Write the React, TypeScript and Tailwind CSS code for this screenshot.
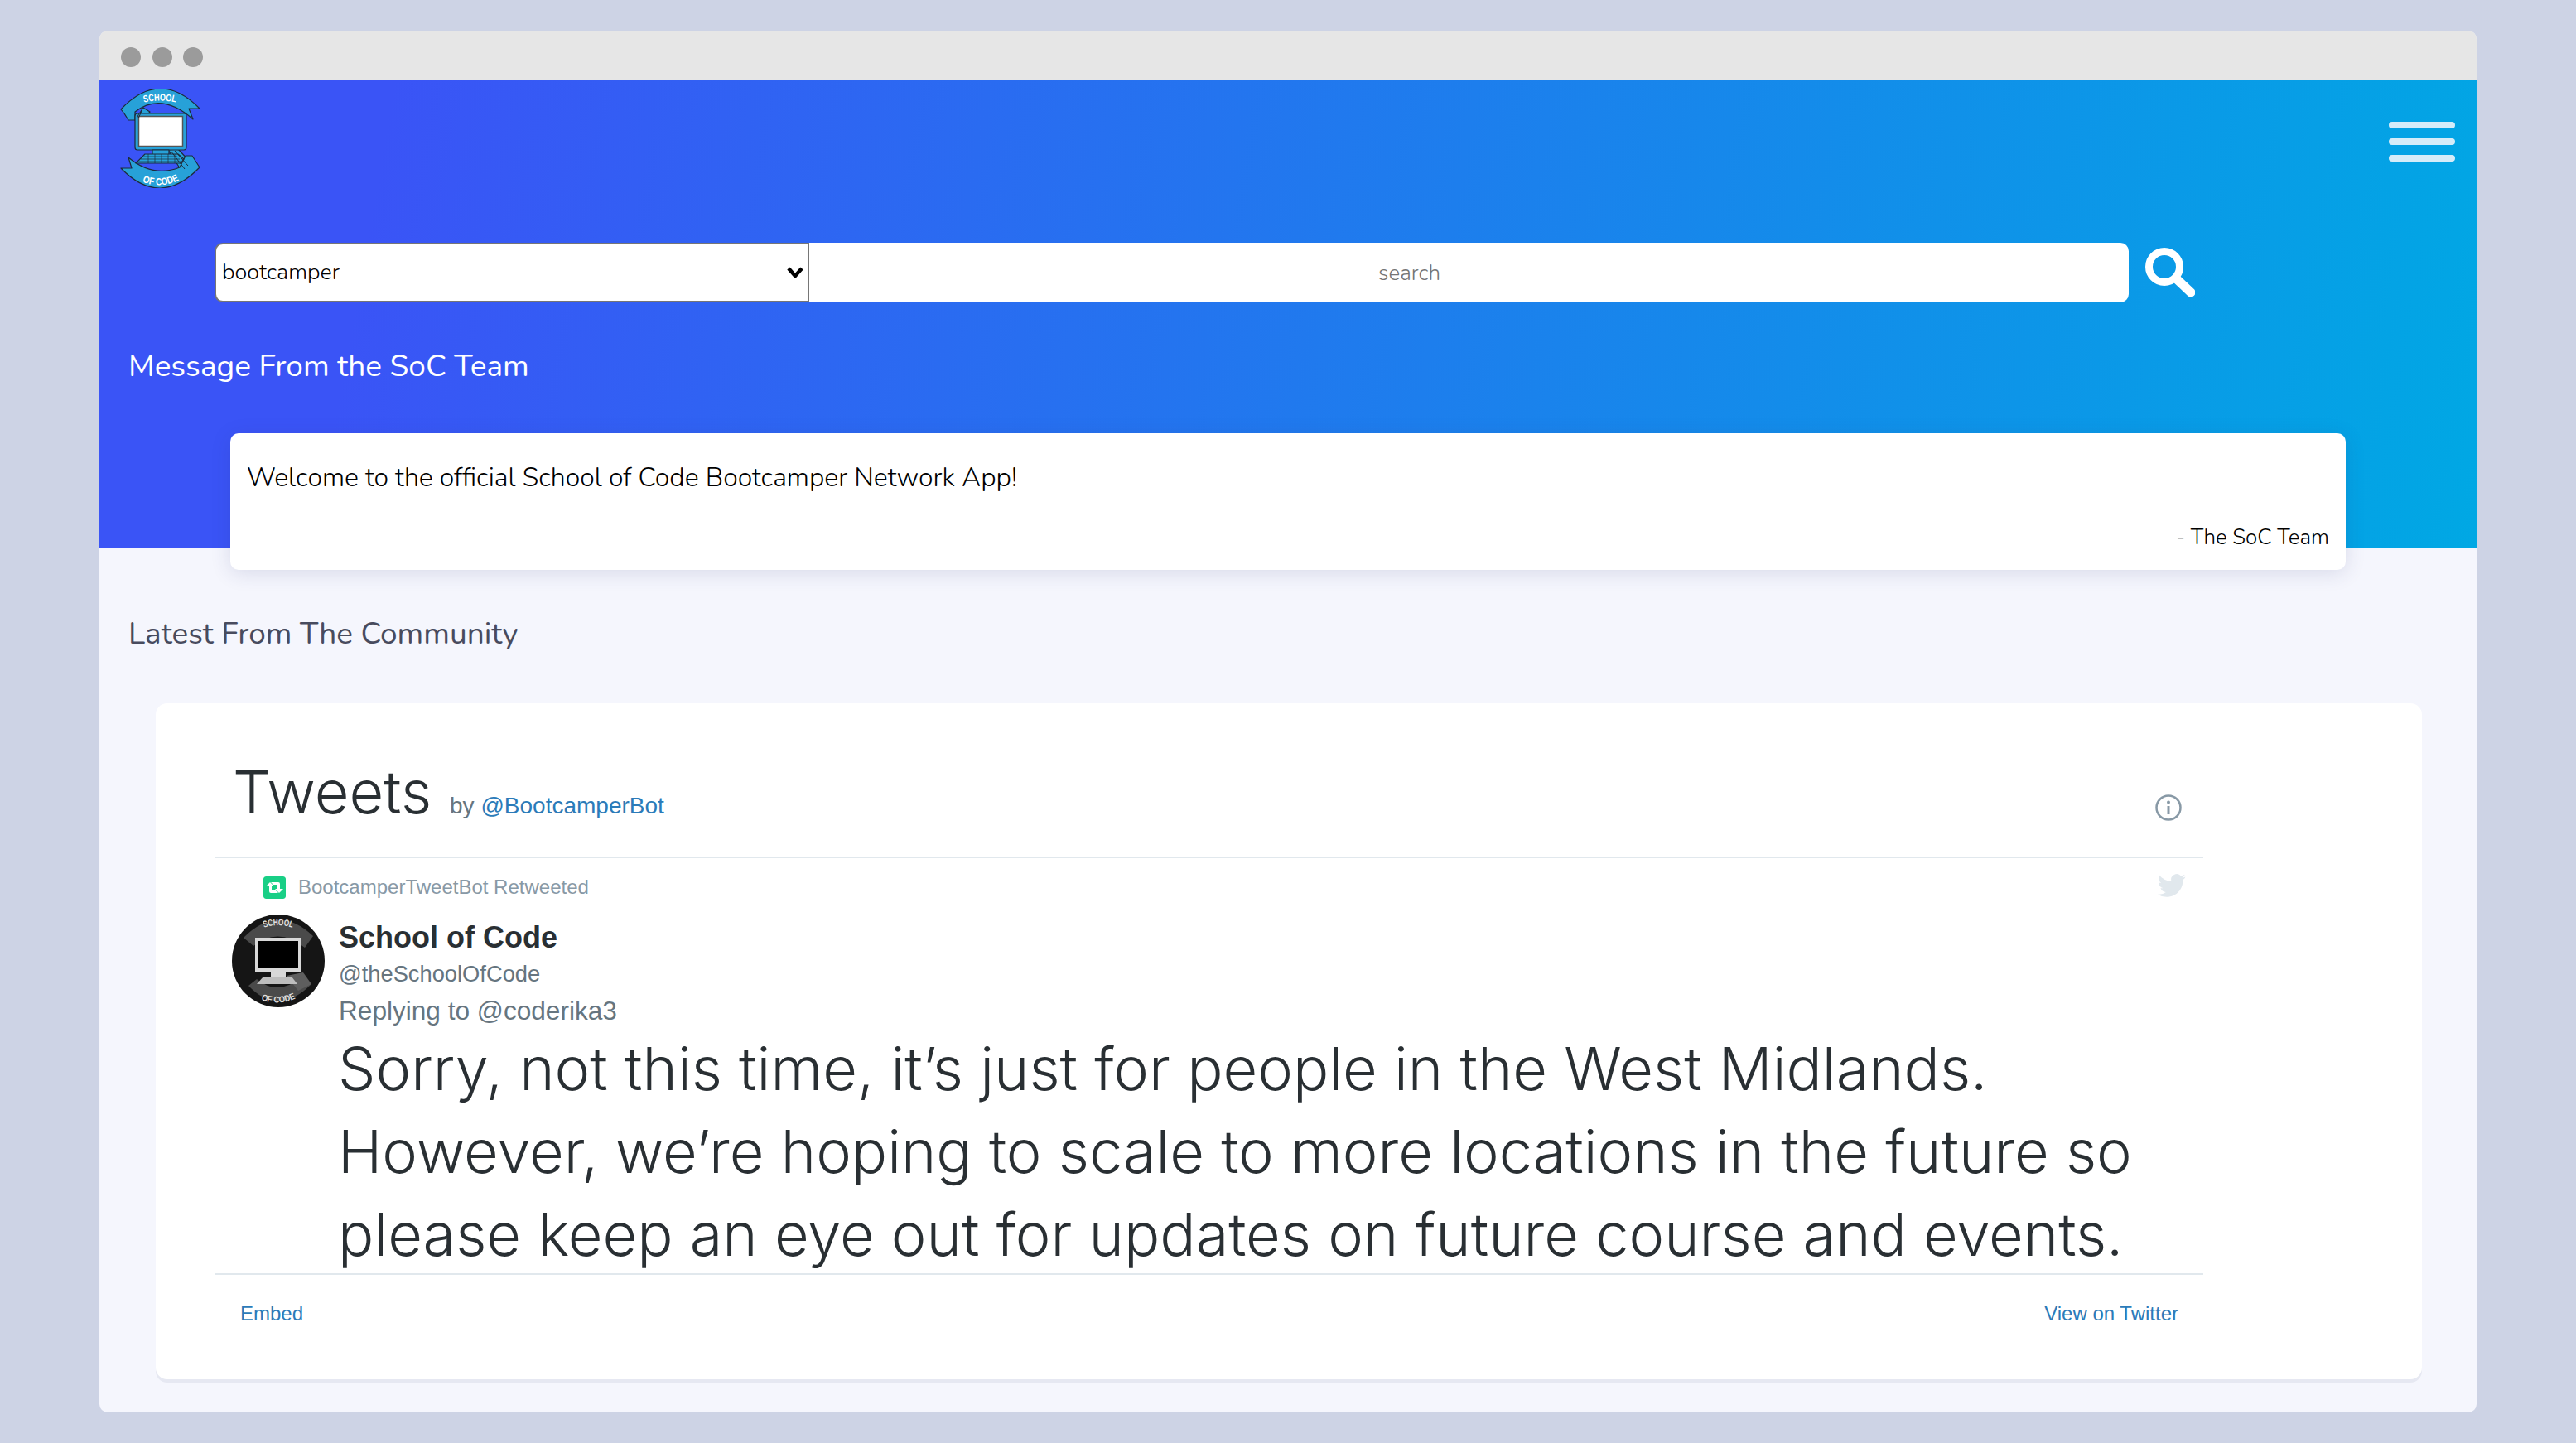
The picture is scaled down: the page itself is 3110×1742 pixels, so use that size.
import React from "react";

function Logo() {
  return (
    <svg viewBox="0 0 97 120" className="w-[97px] h-[120px] block">
      <defs>
        <path id="topArc" d="M24 18 Q48 11 72 18" fill="none" />
        <path id="botArc" d="M26 112 Q48 122 72 110" fill="none" />
      </defs>
      <g stroke="#1d2b3a" strokeWidth="1.2" strokeLinejoin="round" fill="#27a1d8">
        <path d="M28 23 L18 38 L26 40 L36 28 Z" />
        <path d="M58 74 L70 73 L86 90 L76 102 Z" />
        <path d="M1 25 Q48 -24.500 96 24 L83 24 L88 37 Q50 3.500 18 28 L18 38 L10 38 L5 30 Z" />
        <path d="M10 83 Q40 108 72 95 L79 81 L87 81 L96 95 Q48 144.500 1 96 L14 96 Z" />
        <rect x="18" y="30" width="62" height="44" rx="3" />
        <rect x="39" y="74" width="20" height="6" />
        <path d="M19 90 L30 79 L70 79 L77 85 L73 90 Z" />
      </g>
      <rect x="22.500" y="33.500" width="53" height="36" fill="#fff" stroke="#555" strokeWidth="1.500" />
      <path d="M29 82 H69 M25 85 H72 M23 88 H74 M34 79 V90 M42 79 V90 M50 79 V90 M58 79 V90 M66 79 V90" stroke="#1d2b3a" strokeWidth="0.7" fill="none" />
      <path d="M23 30 L20 36 M26 27 L22 36 M61 75 L78 97 M66 75 L82 93" stroke="#1d2b3a" strokeWidth="1" fill="none" />
      <text fontFamily="'Liberation Sans',sans-serif" fontWeight="700" fontSize="12" fill="#fff">
        <textPath href="#topArc" startOffset="50%" textAnchor="middle" textLength="39" lengthAdjust="spacingAndGlyphs">SCHOOL</textPath>
      </text>
      <text fontFamily="'Liberation Sans',sans-serif" fontWeight="700" fontSize="12" fill="#fff">
        <textPath href="#botArc" startOffset="50%" textAnchor="middle" textLength="46" lengthAdjust="spacingAndGlyphs">OF CODE</textPath>
      </text>
    </svg>
  );
}

function Avatar() {
  return (
    <svg viewBox="0 0 112 112" className="w-[112px] h-[112px] block shrink-0">
      <defs>
        <path id="avTop" d="M36 17 Q56 9 76 17" fill="none" />
        <path id="avBot" d="M32 102 Q56 112 80 100" fill="none" />
      </defs>
      <circle cx="56" cy="56" r="56" fill="#151515" />
      <path d="M14 28 Q56 -14 98 26 L88 40 Q56 14 26 38 Z" fill="#4a4a4a" />
      <path d="M20 86 Q56 124 96 84 L86 74 Q56 100 30 78 Z" fill="#4a4a4a" />
      <path d="M66 74 L86 70 L96 84 L80 92 Z" fill="#5e5e5e" />
      <rect x="30" y="30" width="52" height="37" fill="#000" stroke="#d8d8d8" strokeWidth="4" />
      <rect x="47" y="69" width="18" height="7" fill="#d8d8d8" />
      <path d="M30 84 L38 75 L72 75 L79 84 Z" fill="#bdbdbd" />
      <text fontFamily="'Liberation Sans',sans-serif" fontWeight="700" fontSize="11" fill="#e0e0e0">
        <textPath href="#avTop" startOffset="50%" textAnchor="middle" textLength="35" lengthAdjust="spacingAndGlyphs">SCHOOL</textPath>
      </text>
      <text fontFamily="'Liberation Sans',sans-serif" fontWeight="700" fontSize="11" fill="#e0e0e0">
        <textPath href="#avBot" startOffset="50%" textAnchor="middle" textLength="43" lengthAdjust="spacingAndGlyphs">OF CODE</textPath>
      </text>
    </svg>
  );
}

function Bird() {
  return (
    <svg viewBox="0 0 24 24" className="w-[34px] h-[34px] block" fill="#e1e8ed">
      <path d="M23.6 4.6c-.9.4-1.8.7-2.8.8 1-.6 1.8-1.6 2.2-2.7-1 .6-2 1-3.1 1.2A4.9 4.9 0 0 0 11.5 8.400C7.400 8.200 3.800 6.200 1.400 3.200c-.4.700-.7 1.600-.7 2.500 0 1.700.9 3.200 2.200 4.100-.8 0-1.600-.2-2.200-.6v.1c0 2.400 1.700 4.400 3.900 4.800-.4.1-.8.2-1.300.2-.3 0-.6 0-.9-.1.600 2 2.400 3.400 4.600 3.400A9.900 9.900 0 0 1 0 19.500 14 14 0 0 0 7.500 21.700c9.100 0 14-7.500 14-14v-.6c1-.7 1.800-1.600 2.100-2.500z" />
    </svg>
  );
}

export default function App() {
  const sans = "font-['Nunito','Lato','Noto_Sans',sans-serif]";
  const hv = "font-['Liberation_Sans',Arial,sans-serif]";
  const light = "font-['Inter','Liberation_Sans',sans-serif] font-light";
  return (
    <div className="w-[3110px] h-[1742px] bg-[#cdd3e5] pt-[37px] pl-[120px] overflow-hidden">
      <div className="w-[2870px] h-[1668px] rounded-[10px] overflow-hidden bg-[#f5f6fd] flex flex-col">
        <div className="h-[60px] shrink-0 bg-[#e6e6e6] flex items-center gap-[13.500px] pl-[26px] pt-[4px]">
          <div className="w-[24px] h-[24px] rounded-full bg-[#9b9b9b]" />
          <div className="w-[24px] h-[24px] rounded-full bg-[#9b9b9b]" />
          <div className="w-[24px] h-[24px] rounded-full bg-[#9b9b9b]" />
        </div>

        <div className="h-[564px] shrink-0 bg-[linear-gradient(100deg,#3a54f6_12%,#00a8e4_100%)] flex flex-col">
          <div className="flex justify-between pl-[25px] pr-[26px] pt-[10px] h-[196px]">
            <Logo />
            <div className="flex flex-col gap-[12px] pt-[40px]">
              <div className="w-[80px] h-[8px] rounded-full bg-[#d5ecf9]" />
              <div className="w-[80px] h-[8px] rounded-full bg-[#d5ecf9]" />
              <div className="w-[80px] h-[8px] rounded-full bg-[#d5ecf9]" />
            </div>
          </div>
          <div className="flex items-center pl-[139px]">
            <div className="relative w-[718px] h-[72px]">
              <select className={`${sans} appearance-none w-full h-full bg-white rounded-l-[10px] border-2 border-[#767676] pl-[7px] text-[27px] text-black font-light`} defaultValue="bootcamper">
                <option value="bootcamper">bootcamper</option>
              </select>
              <svg viewBox="0 0 20 14" className="absolute right-[7px] top-[29px] w-[20px] h-[14px] pointer-events-none" fill="none" stroke="#000" strokeWidth="4.500">
                <path d="M2 2 L10 11 L18 2" />
              </svg>
            </div>
            <input
              placeholder="search"
              className={`${sans} w-[1593px] h-[72px] bg-white rounded-r-[10px] text-center pr-[144px] text-[26px] font-light outline-none placeholder:text-[#757575]`}
            />
            <svg viewBox="0 0 60 60" className="w-[60px] h-[60px] ml-[20px]" fill="none" stroke="#fff">
              <circle cx="23" cy="23" r="18.500" strokeWidth="9" />
              <path d="M37 37 L55 54" strokeWidth="11" strokeLinecap="round" />
            </svg>
          </div>
          <h2 className={`${sans} pl-[35px] mt-[51px] text-[37px] leading-[52px] text-white font-normal`}>Message From the SoC Team</h2>
        </div>

        <div className={`${sans} relative -mt-[138px] ml-[158px] w-[2554px] h-[165px] shrink-0 bg-white rounded-[10px] shadow-[0_4px_24px_rgba(40,50,110,0.14)] flex flex-col justify-between pt-[36px] pb-[24px] px-[20px] text-black`}>
          <p className="text-[32px] leading-[36px] font-light">Welcome to the official School of Code Bootcamper Network App!</p>
          <p className="text-right text-[26px] leading-[30px] font-light">- The SoC Team</p>
        </div>

        <h2 className={`${sans} pl-[35px] mt-[51px] text-[37px] leading-[52px] text-[#484b5e] font-normal`}>Latest From The Community</h2>

        <div className="ml-[68px] mt-[58px] w-[2736px] h-[816px] bg-white rounded-[14px] shadow-[0_4px_0_#e6e8f2] pl-[72px]">
          <div className="w-[2400px] h-[187px] border-b-2 border-[#e1e8ed] pl-[21px] pr-[26px] flex items-start justify-between">
            <div className="flex items-baseline gap-[22px] pt-[62px]">
              <span className={`${light} text-[72px] leading-[90px] text-[#292f33]`}>Tweets</span>
              <span className={`${hv} text-[28px] text-[#66757f]`}>by <span className="text-[#2b7bb9]">@BootcamperBot</span></span>
            </div>
            <svg viewBox="0 0 32 32" className="w-[32px] h-[32px] mt-[110px]" fill="none" stroke="#8899a6">
              <circle cx="16" cy="16" r="14.500" strokeWidth="2.500" />
              <circle cx="16" cy="9.500" r="2" fill="#8899a6" stroke="none" />
              <path d="M16 14 V24" strokeWidth="3" />
            </svg>
          </div>

          <div className="w-[2400px] h-[501px] relative overflow-hidden">
            <div className="absolute right-[21px] top-[16px]"><Bird /></div>
            <div className="flex items-center h-[36px] pl-[58px] mt-[17px] gap-[15px]">
              <svg viewBox="0 0 27 27" className="w-[27px] h-[27px] rounded-[3px]">
                <rect width="27" height="27" rx="3" fill="#19cf86" />
                <path d="M3 12 L8 7 L13 12 H10 V17 H15 L18 20 H9 Q7 20 7 18 V12 Z M24 15 L19 20 L14 15 H17 V10 H12 L9 7 H18 Q20 7 20 9 V15 Z" fill="#fff" />
              </svg>
              <span className={`${hv} text-[24px] leading-[36px] text-[#8899a6]`}>BootcamperTweetBot Retweeted</span>
            </div>
            <div className="flex pl-[20px] pt-[15px] gap-[17px]">
              <Avatar />
              <div className={`${hv} pt-[6px]`}>
                <div className="text-[36px] leading-[44px] font-bold text-[#292f33]">School of Code</div>
                <div className="text-[27.300px] leading-[44px] text-[#66757f]">@theSchoolOfCode</div>
                <div className="text-[31.600px] leading-[44px] text-[#66757f]">Replying to @coderika3</div>
              </div>
            </div>
            <p className={`${light} ml-[148px] -mt-[2px] text-[72px] leading-[100px] text-[#292f33] whitespace-nowrap`}>
              Sorry, not this time, it’s just for people in the West Midlands.<br />
              However, we’re hoping to scale to more locations in the future so<br />
              please keep an eye out for updates on future course and events.
            </p>
          </div>

          <div className={`${hv} w-[2400px] border-t-2 border-[#e1e8ed] flex justify-between pt-[32px] px-[30px] text-[24px] leading-[30px] text-[#2b7bb9]`}>
            <span>Embed</span>
            <span>View on Twitter</span>
          </div>
        </div>
      </div>
    </div>
  );
}
